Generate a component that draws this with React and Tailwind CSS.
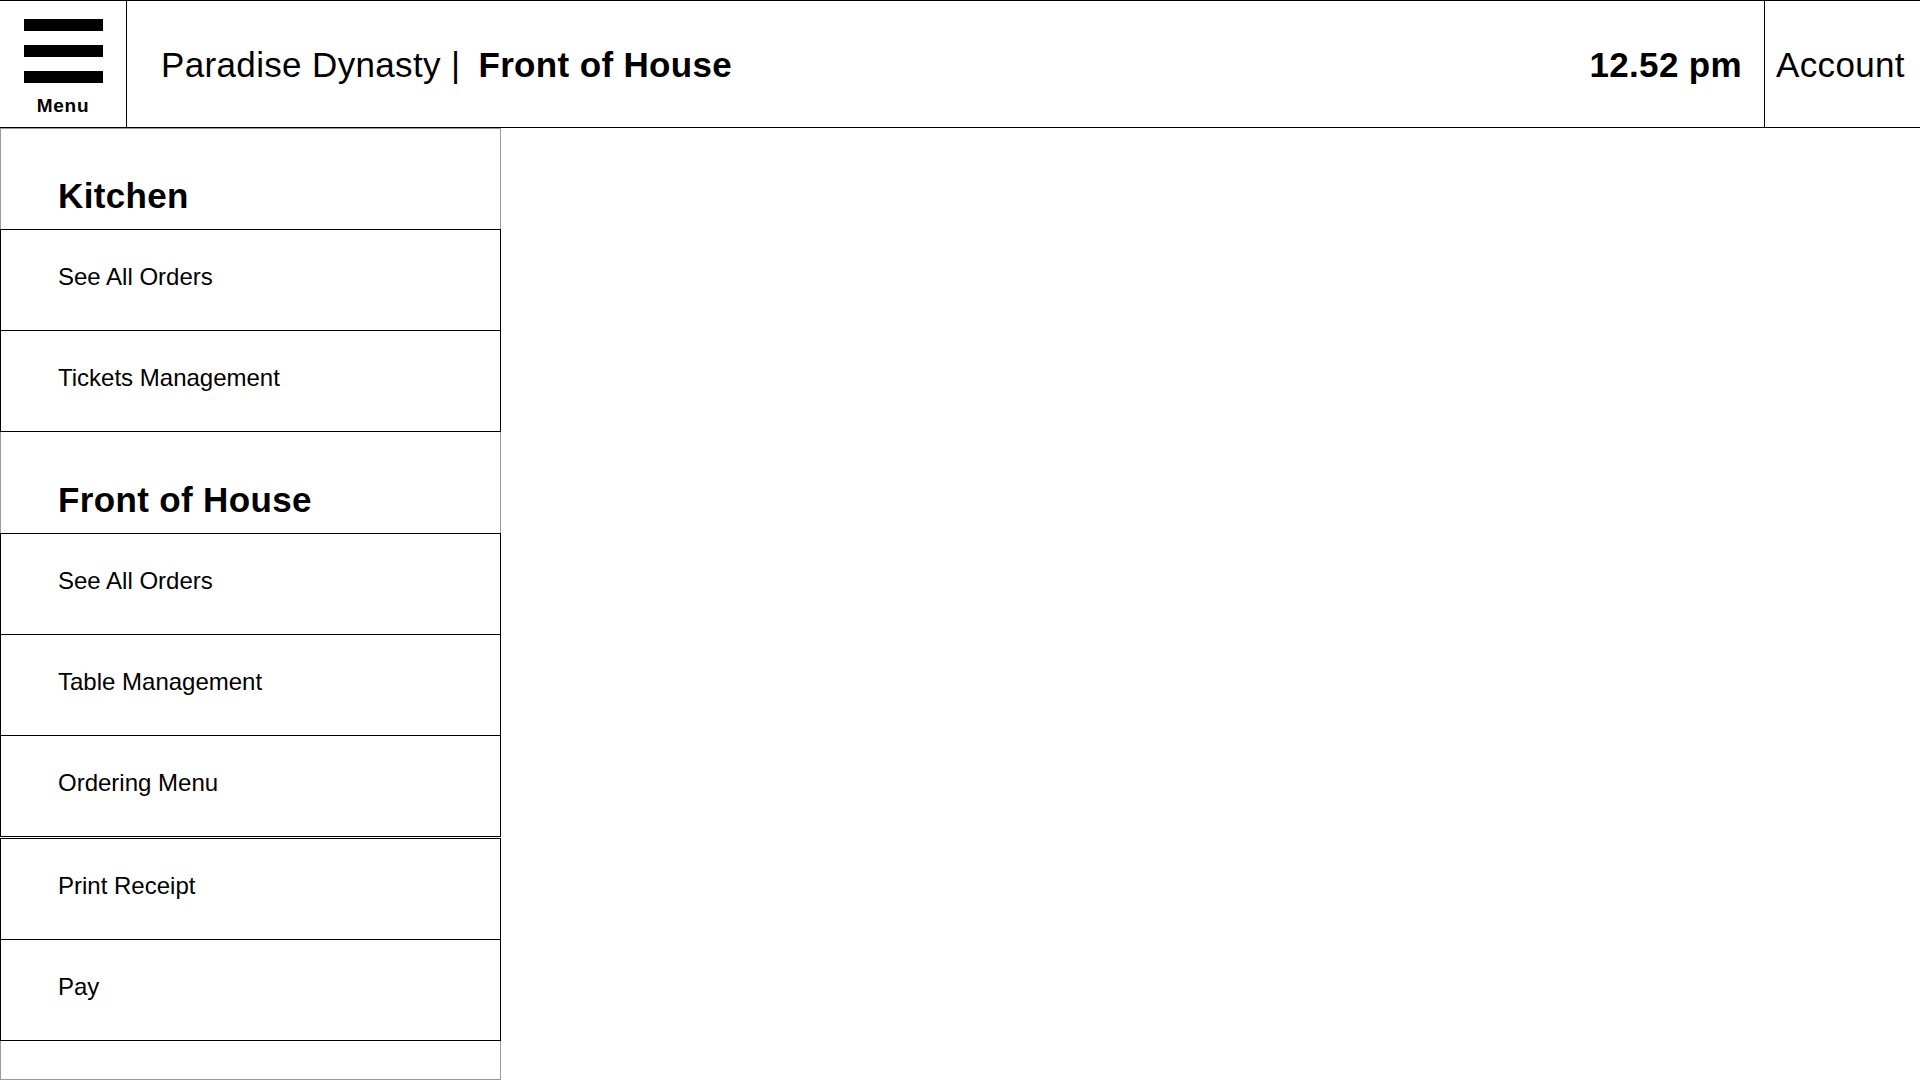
import React from "react";

const sections = [
  {
    title: "Kitchen",
    groups: [["See All Orders", "Tickets Management"]],
  },
  {
    title: "Front of House",
    groups: [
      ["See All Orders", "Table Management", "Ordering Menu"],
      ["Print Receipt", "Pay"],
    ],
  },
];

const Header = () => (
  <header className="h-[128px] shrink-0 flex border-t border-b border-black bg-white">
    {/* menu button */}
    <div className="w-[127px] shrink-0 border-r border-black flex flex-col items-center pt-[18px]">
      <div className="flex flex-col gap-[14px]">
        <span className="block w-[79px] h-[12px] bg-black" />
        <span className="block w-[79px] h-[12px] bg-black" />
        <span className="block w-[79px] h-[12px] bg-black" />
      </div>
      <span className="mt-[13px] text-[19px] leading-none font-bold tracking-[0.04em]">Menu</span>
    </div>

    <div className="flex-1 flex items-center pl-[34px] text-[35px] leading-none tracking-[0.01em]">
      <span>Paradise Dynasty |</span>
      <span className="ml-[18px] font-bold">Front of House</span>
    </div>

    <div className="flex items-center pr-[22px] text-[35px] leading-none font-bold tracking-[0.01em]">
      12.52 pm
    </div>

    <div className="w-[156px] shrink-0 border-l border-black flex items-center pl-[11px] text-[35px] leading-none tracking-[0.01em]">
      Account
    </div>
  </header>
);

const SideItem = ({ label }) => (
  <button className="h-[101px] w-full flex items-center pl-[57px] pb-[6px] border-x border-b border-black text-left text-[24px] leading-none bg-white">
    {label}
  </button>
);

const Sidebar = () => (
  <aside className="w-[501px] shrink-0 flex flex-col">
    {sections.map((section, i) => (
      <React.Fragment key={section.title}>
        <div
          className={
            i === 0
              ? "h-[101px] flex items-end pl-[57px] pb-[16px] border-x border-t border-[#9a9a9a]"
              : "h-[101px] flex items-end pl-[57px] pb-[16px] border-x border-[#9a9a9a]"
          }
        >
          <h2 className="text-[35px] leading-none font-bold tracking-[0.01em]">{section.title}</h2>
        </div>
        {section.groups.map((group, j) => (
          <div key={j} className={j > 0 ? "mt-px border-t border-black" : "border-t border-black"}>
            {group.map((label) => (
              <SideItem key={label} label={label} />
            ))}
          </div>
        ))}
      </React.Fragment>
    ))}
    <div className="flex-1 border-x border-b border-[#9a9a9a]" />
  </aside>
);

export default function App() {
  return (
    <div className="h-[1080px] w-full flex flex-col bg-white text-black font-['Liberation_Sans',Arial,sans-serif] overflow-hidden">
      <Header />
      <div className="flex-1 flex">
        <Sidebar />
        <main className="flex-1" />
      </div>
    </div>
  );
}
